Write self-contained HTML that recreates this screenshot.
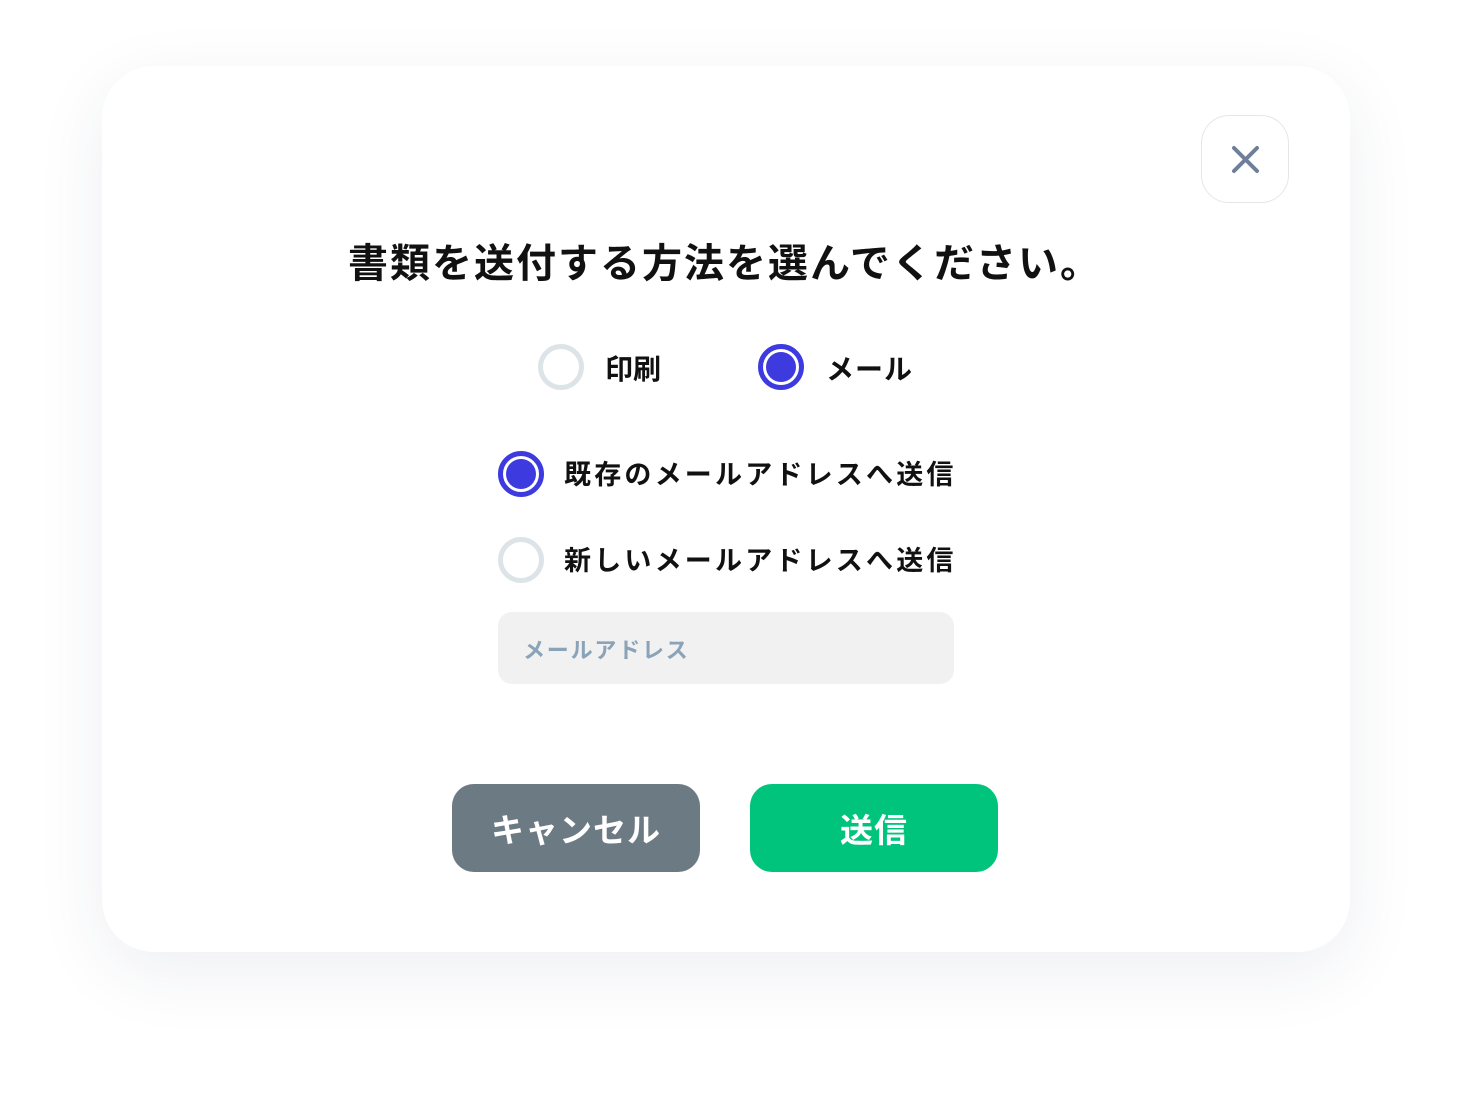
<!DOCTYPE html>
<html><head><meta charset="utf-8"><style>
body{margin:0;width:1465px;height:1103px;background:#fff;font-family:"Liberation Sans","Noto Sans CJK JP",sans-serif;position:relative;overflow:hidden}
.card{position:absolute;left:102px;top:66px;width:1248px;height:886px;border-radius:52px;background:#fff;box-shadow:0 20px 70px rgba(40,50,90,0.08)}
.close{position:absolute;left:1201px;top:115px;width:88px;height:88px;border:1.5px solid #e6e6e6;border-radius:28px;box-sizing:border-box}
.t{position:absolute;white-space:nowrap;font-weight:bold;color:#111}
.r{position:absolute;width:46px;height:46px;border-radius:50%;box-sizing:border-box;border:5px solid #dde4e8}
.r.on{border-color:#3d3ae0}
.r.on::after{content:"";position:absolute;left:3px;top:3px;width:30px;height:30px;border-radius:50%;background:#3d3ae0}
.input{position:absolute;left:498px;top:612px;width:456px;height:72px;background:#f1f1f1;border-radius:14px}
.btn{position:absolute;top:784px;width:248px;height:88px;border-radius:22px;color:#fff;font-weight:bold;font-size:33px;text-align:center;line-height:94px;letter-spacing:1px}
</style></head><body>
<div class="card"></div>
<div class="close"><svg width="88" height="88" style="position:absolute;left:-1.5px;top:-1.5px"><path d="M33 33L56 56M56 33L33 56" stroke="#6f7e99" stroke-width="4" stroke-linecap="round"/></svg></div>
<div class="t" style="left:348px;top:231px;font-size:40px;letter-spacing:2px">書類を送付する方法を選んでください。</div>
<div class="r" style="left:538px;top:344px"></div>
<div class="t" style="left:605px;top:348px;font-size:28px">印刷</div>
<div class="r on" style="left:758px;top:344px"></div>
<div class="t" style="left:826px;top:348px;font-size:28px;letter-spacing:1px">メール</div>
<div class="r on" style="left:498px;top:451px"></div>
<div class="t" style="left:564px;top:453px;font-size:27px;letter-spacing:3.2px">既存のメールアドレスへ送信</div>
<div class="r" style="left:498px;top:537px"></div>
<div class="t" style="left:564px;top:539px;font-size:27px;letter-spacing:3.2px">新しいメールアドレスへ送信</div>
<div class="input"><div class="t" style="left:25px;top:21px;font-size:22px;letter-spacing:1.8px;color:#8aa3b8">メールアドレス</div></div>
<div class="btn" style="left:452px;background:#6c7a84">キャンセル</div>
<div class="btn" style="left:750px;background:#00c47c">送信</div>
</body></html>
